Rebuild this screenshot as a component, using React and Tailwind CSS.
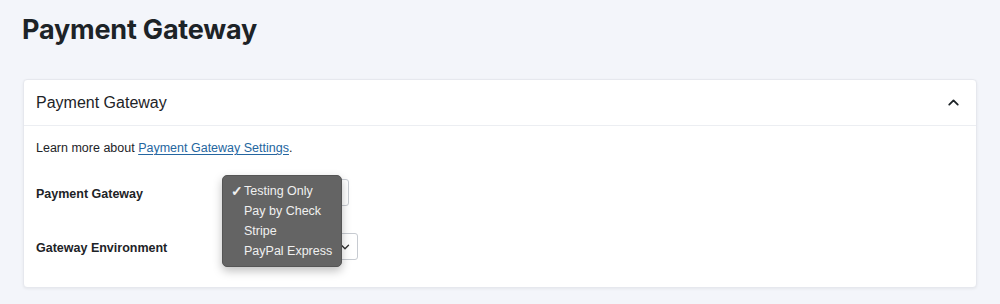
// App.jsx — Payment Gateway settings panel with open select menu
import { ChevronUp, ChevronDown } from 'lucide-react'

const GATEWAYS = ['Testing Only', 'Pay by Check', 'Stripe', 'PayPal Express']

const FormRow = ({ label, children }) => (
  <div className="flex items-center">
    <div className="w-[186px] pt-[3px] text-[12.5px] font-bold text-[#1d2327]">{label}</div>
    {children}
  </div>
)

const App = () => {
  return (
    <div className="min-h-[304px] bg-[#f3f5fa] px-[22px] pt-[13px] font-['Liberation_Sans',Arial,sans-serif] text-[#1d2327]">
      <h1 className="font-['Inter',sans-serif] text-[27px] leading-[34px] font-bold tracking-[-0.2px] text-[#1d2327]">Payment Gateway</h1>

      <div className="mt-[32px] mx-[1px] bg-white rounded-[4px] border border-[#e6e8ee] shadow-[0_1px_3px_rgba(0,0,0,0.06)]">
        {/* Header */}
        <div className="h-[46px] flex items-center justify-between pl-[12px] pr-[14px] border-b border-[#eceef2]">
          <h2 className="text-[16px] font-normal">Payment Gateway</h2>
          <ChevronUp className="w-[17px] h-[17px] text-[#1d2327]" strokeWidth={2.6} />
        </div>

        {/* Body */}
        <div className="pl-[12px] pt-[12px] pb-[27px]">
          <p className="text-[12.5px] leading-[20px]">
            Learn more about{' '}
            <a href="#" className="text-[#2566a0] underline underline-offset-2">Payment Gateway Settings</a>.
          </p>

          <div className="mt-[21px] flex flex-col gap-[27px]">
            <FormRow label="Payment Gateway">
              <div className="relative">
                <div className="w-[127px] h-[27px] border border-[#c7cbd1] rounded-[3px] bg-white" />
                {/* open native menu */}
                <div className="absolute left-0 top-[-4px] w-[120px] py-[5px] bg-[#646464] border border-[#555] rounded-[5px] shadow-[0_4px_10px_rgba(0,0,0,0.25)] z-10">
                  {GATEWAYS.map((g, i) => (
                    <div key={g} className="flex items-center h-[20px] text-[12.5px] text-[#f0f0f0]">
                      <span className="w-[21px] pl-[8px] text-[14px] font-bold">{i === 0 ? '✓' : ''}</span>
                      <span>{g}</span>
                    </div>
                  ))}
                </div>
              </div>
            </FormRow>

            <FormRow label="Gateway Environment">
              <div className="w-[136px] h-[27px] border border-[#c7cbd1] rounded-[3px] bg-white flex items-center justify-end pr-[5px]">
                <ChevronDown className="w-[14px] h-[14px] text-[#333]" strokeWidth={2.4} />
              </div>
            </FormRow>
          </div>
        </div>
      </div>
    </div>
  )
}

export default App
